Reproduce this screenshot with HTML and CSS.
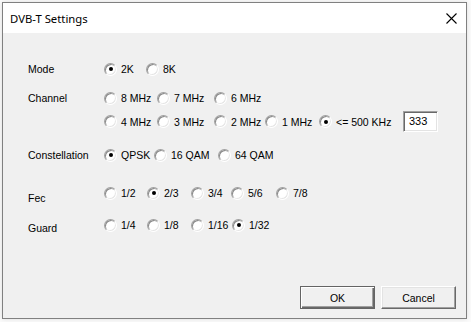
FILE: index.html
```html
<!DOCTYPE html>
<html>
<head>
<meta charset="utf-8">
<link rel="stylesheet" href="styles.css">
</head>
<body>
<div class="window">
  <div class="titlebar">
    <span class="title">DVB-T Settings</span>
    <svg class="close" width="11" height="11" viewBox="0 0 11 11"><path d="M0.5 0.5 L10.5 10.5 M10.5 0.5 L0.5 10.5" stroke="#000" stroke-width="1.1" fill="none"/></svg>
  </div>
  <div class="content">
    <div class="row row-mode">
      <div class="label">Mode</div>
      <div class="opts opts-mode">
        <label class="opt"><span class="radio checked"></span><span>2K</span></label>
        <label class="opt"><span class="radio"></span><span>8K</span></label>
      </div>
    </div>

    <div class="row row-channel">
      <div class="label label-channel">Channel</div>
      <div class="channel-lines">
        <div class="opts opts-ch1">
          <label class="opt"><span class="radio"></span><span>8 MHz</span></label>
          <label class="opt"><span class="radio"></span><span>7 MHz</span></label>
          <label class="opt"><span class="radio"></span><span>6 MHz</span></label>
        </div>
        <div class="opts opts-ch2">
          <label class="opt"><span class="radio"></span><span>4 MHz</span></label>
          <label class="opt"><span class="radio"></span><span>3 MHz</span></label>
          <label class="opt"><span class="radio"></span><span>2 MHz</span></label>
          <label class="opt"><span class="radio"></span><span>1 MHz</span></label>
          <label class="opt"><span class="radio checked"></span><span>&lt;= 500 KHz</span></label>
          <div class="edit">333</div>
        </div>
      </div>
    </div>

    <div class="row row-const">
      <div class="label">Constellation</div>
      <div class="opts opts-const">
        <label class="opt"><span class="radio checked"></span><span>QPSK</span></label>
        <label class="opt"><span class="radio"></span><span>16 QAM</span></label>
        <label class="opt"><span class="radio"></span><span>64 QAM</span></label>
      </div>
    </div>

    <div class="row row-fec">
      <div class="label label-fec">Fec</div>
      <div class="opts opts-fec">
        <label class="opt"><span class="radio"></span><span>1/2</span></label>
        <label class="opt"><span class="radio checked"></span><span>2/3</span></label>
        <label class="opt"><span class="radio"></span><span>3/4</span></label>
        <label class="opt"><span class="radio"></span><span>5/6</span></label>
        <label class="opt"><span class="radio"></span><span>7/8</span></label>
      </div>
    </div>

    <div class="row row-guard">
      <div class="label label-guard">Guard</div>
      <div class="opts opts-guard">
        <label class="opt"><span class="radio"></span><span>1/4</span></label>
        <label class="opt"><span class="radio"></span><span>1/8</span></label>
        <label class="opt"><span class="radio"></span><span>1/16</span></label>
        <label class="opt"><span class="radio checked"></span><span>1/32</span></label>
      </div>
    </div>

    <div class="buttons">
      <div class="btn btn-default">OK</div>
      <div class="btn">Cancel</div>
    </div>
  </div>
</div>
</body>
</html>
```

FILE: styles.css
```css
html, body {
  margin: 0;
  padding: 0;
}
body {
  background: #fbfbfb;
  font-family: "Liberation Sans", Arial, sans-serif;
  font-size: 10.5px;
  color: #000;
  width: 471px;
  height: 322px;
  overflow: hidden;
}
.window {
  margin: 2px 0 0 2px;
  width: 465px;
  height: 317px;
  box-sizing: border-box;
  border: 1px solid #808080;
  background: #f0f0f0;
  display: flex;
  flex-direction: column;
  box-shadow: 0 0 5px rgba(0,0,0,0.12);
}
.titlebar {
  height: 30px;
  flex: none;
  background: #fff;
  display: flex;
  align-items: center;
  justify-content: space-between;
  padding: 0 9px 0 7px;
}
.title {
  font-family: "Noto Sans", "Liberation Sans", sans-serif;
  font-size: 11.3px;
  color: #000;
}
.close {
  display: block;
}
.content {
  flex: 1;
  display: flex;
  flex-direction: column;
  padding: 28px 10px 9px 25px;
}
.row {
  display: flex;
  align-items: flex-start;
}
.label {
  width: 76px;
  flex: none;
  line-height: 16px;
}
.opts {
  display: grid;
  grid-auto-flow: column;
  align-items: center;
  height: 16px;
}
.opt {
  display: flex;
  align-items: center;
  gap: 4px;
  line-height: 16px;
  white-space: nowrap;
}
.radio {
  width: 13px;
  height: 13px;
  box-sizing: border-box;
  border-radius: 50%;
  border: 1px solid;
  border-color: #a0a0a0 #ffffff #ffffff #a0a0a0;
  background: #fff;
  box-shadow: inset 1px 1px 0 #8a8a8a, inset -1px -1px 0 #e6e6e6;
  position: relative;
  flex: none;
}
.radio.checked::after {
  content: "";
  position: absolute;
  left: 3.5px;
  top: 3.5px;
  width: 4px;
  height: 4px;
  border-radius: 50%;
  background: #000;
}
.opts-mode { grid-template-columns: 42px auto; }
.row-channel { margin-top: 13px; }
.channel-lines {
  display: flex;
  flex-direction: column;
  gap: 5px;
}
.opts-ch1 { grid-template-columns: 53px 57px auto; }
.opts-ch2 {
  grid-template-columns: 53px 57px 51px 54px 84px auto;
  height: 21px;
}
.edit {
  width: 35px;
  height: 21px;
  box-sizing: border-box;
  background: #fff;
  border: 1px solid;
  border-color: #a0a0a0 #ffffff #ffffff #a0a0a0;
  box-shadow: inset 1px 1px 0 #696969, inset -1px -1px 0 #e3e3e3;
  padding-left: 5px;
  line-height: 19px;
  font-size: 11px;
}
.row-const { margin-top: 15px; }
.opts-const { grid-template-columns: 50px 64px auto; }
.row-fec { margin-top: 22px; }
.label-fec { padding-top: 5px; }
.opts-fec { grid-template-columns: 43px 44px 40px 45px auto; }
.row-guard { margin-top: 11px; }
.label-guard { padding-top: 3px; }
.opts-guard { grid-template-columns: 43px 44px 41px auto; }
.buttons {
  margin-top: auto;
  display: flex;
  justify-content: flex-end;
  gap: 6px;
}
.btn {
  width: 75px;
  height: 23px;
  box-sizing: border-box;
  border: 1px solid;
  border-color: #ffffff #696969 #696969 #ffffff;
  box-shadow: inset -1px -1px 0 #a0a0a0, inset 1px 1px 0 #e3e3e3;
  background: #f0f0f0;
  display: flex;
  align-items: center;
  justify-content: center;
  font-size: 10.5px;
}
.btn-default {
  border-color: #646464;
  box-shadow: inset 1px 1px 0 #ffffff, inset -1px -1px 0 #696969, inset -2px -2px 0 #a0a0a0;
}
```
